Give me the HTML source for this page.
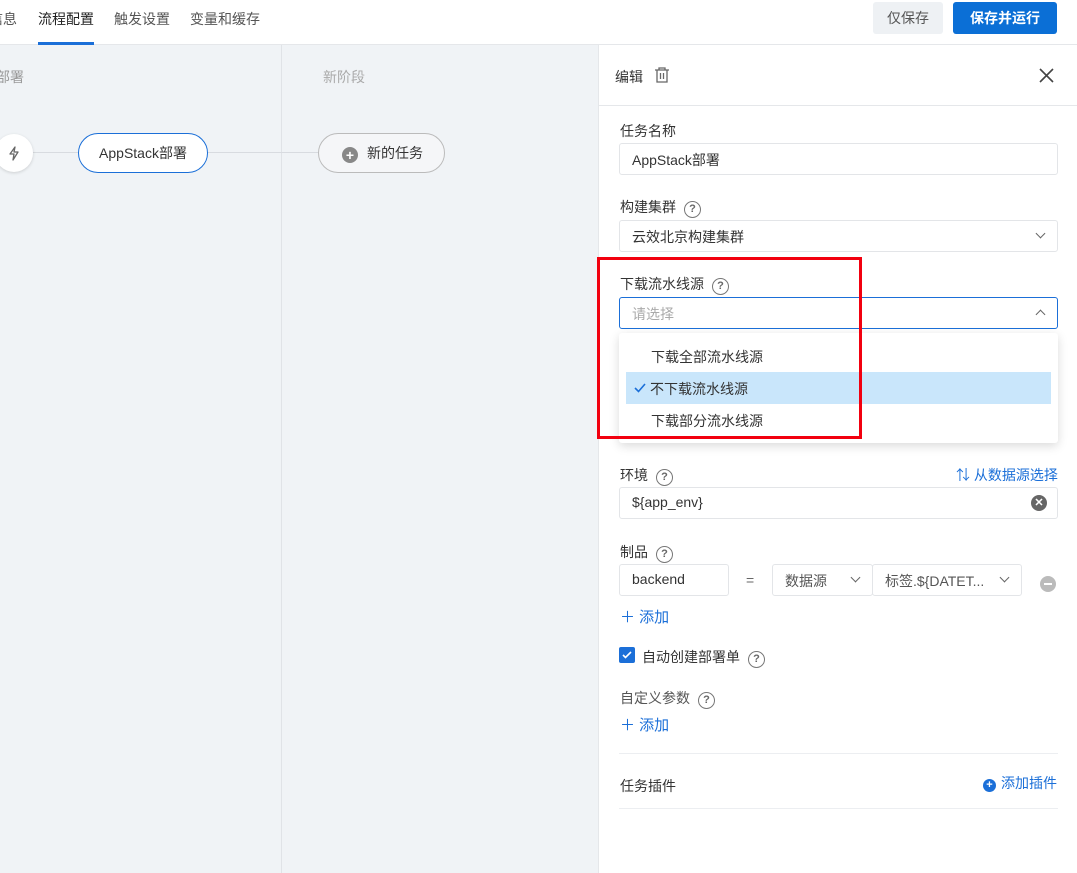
<!DOCTYPE html>
<html><head><meta charset="utf-8"><style>
*{box-sizing:border-box;margin:0;padding:0}
body{width:1077px;height:873px;overflow:hidden;position:relative;font-family:"Liberation Sans","Noto Sans CJK SC",sans-serif;font-size:14px;color:#333;background:#fff}
.a{position:absolute}
.top{left:0;top:0;width:1077px;height:45px;background:#fff;border-bottom:1px solid #e5e7ea}
.tab{top:9px;font-size:14px;color:#555}
.canvas{left:0;top:45px;width:598px;height:828px;background:#f0f3f6}
.panel{left:598px;top:45px;width:479px;height:828px;background:#fff;border-left:1px solid #e5e7ea}
.lbl{left:620px;font-size:14px;color:#333}
.inp{left:619px;width:439px;height:32px;border:1px solid #e3e5e8;border-radius:3px;background:#fff;font-size:14px;color:#333;padding:6px 12px}
.q{display:inline-block;width:17px;height:17px;border:1.5px solid #777;border-radius:50%;font-size:11px;line-height:14px;text-align:center;color:#666;vertical-align:0;margin-left:8px;font-weight:bold}
.blue{color:#1b6fd8}
.chev{position:absolute;right:13px;top:9px;width:7px;height:7px;border-right:1.3px solid #666;border-bottom:1.3px solid #666;transform:rotate(45deg)}
</style></head><body>
<div class="a top"></div>
<div class="a tab" style="left:-11px">信息</div>
<div class="a tab" style="left:38px;color:#222">流程配置</div>
<div class="a" style="left:38px;top:42px;width:56px;height:3px;background:#1b6fd8"></div>
<div class="a tab" style="left:114px">触发设置</div>
<div class="a tab" style="left:190px">变量和缓存</div>
<div class="a" style="left:873px;top:2px;width:70px;height:32px;background:#eef1f4;border-radius:3px;color:#555;text-align:center;line-height:32px">仅保存</div>
<div class="a" style="left:953px;top:2px;width:104px;height:32px;background:#0b6fd6;border-radius:3px;color:#fff;text-align:center;line-height:32px;font-weight:bold">保存并运行</div>

<div class="a canvas"></div>
<div class="a" style="left:281px;top:45px;width:1px;height:828px;background:#e0e3e7"></div>
<div class="a" style="left:-4px;top:67px;color:#999">部署</div>
<div class="a" style="left:323px;top:67px;color:#aaa">新阶段</div>
<div class="a" style="left:20px;top:152px;width:300px;height:1px;background:#d8dbe0"></div>
<div class="a" style="left:-5px;top:134px;width:38px;height:38px;border-radius:50%;background:#fff;box-shadow:0 1px 3px rgba(0,0,0,.15)"></div>
<svg class="a" style="left:8px;top:146px" width="12" height="15" viewBox="0 0 12 15" fill="none" stroke="#666" stroke-width="1.3" stroke-linejoin="round"><path d="M7 1L2 8h4l-1 6 5-8H6z"/></svg>
<div class="a" style="left:78px;top:133px;width:130px;height:40px;border:1px solid #1b6fd8;border-radius:20px;background:#fff;text-align:center;line-height:38px;color:#333">AppStack部署</div>
<div class="a" style="left:318px;top:133px;width:127px;height:40px;border:1px solid #bbb;border-radius:20px;background:#f5f6f8;line-height:38px;color:#333;padding-left:23px"><span style="display:inline-block;width:16px;height:16px;border-radius:50%;background:#888;color:#fff;font-size:14px;line-height:16px;text-align:center;font-weight:bold;vertical-align:-2px;margin-right:9px">+</span>新的任务</div>

<div class="a panel"></div>
<div class="a" style="left:598px;top:105px;width:479px;height:1px;background:#e5e7ea"></div>
<div class="a" style="left:615px;top:67px">编辑</div>
<svg class="a" style="left:654px;top:67px" width="16" height="16" viewBox="0 0 16 16" fill="none" stroke="#666" stroke-width="1.3"><path d="M1 3h14M5 3V1h6v2M3 3v12h10V3M6.5 6v6M9.5 6v6"/></svg>
<svg class="a" style="left:1039px;top:68px" width="15" height="15" viewBox="0 0 15 15" stroke="#444" stroke-width="1.6"><path d="M1 1l13 13M14 1L1 14"/></svg>

<div class="a lbl" style="top:121px">任务名称</div>
<div class="a inp" style="top:143px">AppStack部署</div>
<div class="a lbl" style="top:197px">构建集群<span class="q">?</span></div>
<div class="a inp" style="top:220px">云效北京构建集群<span class="chev"></span></div>
<div class="a lbl" style="top:274px">下载流水线源<span class="q">?</span></div>
<div class="a inp" style="top:297px;border-color:#1b6fd8;color:#aaa">请选择<span class="chev" style="transform:rotate(225deg);top:13px"></span></div>
<div class="a" style="left:619px;top:333px;width:439px;height:110px;background:#fff;border-radius:3px;box-shadow:0 3px 10px rgba(0,0,0,.15)"></div>
<div class="a" style="left:651px;top:347px">下载全部流水线源</div>
<div class="a" style="left:626px;top:372px;width:425px;height:32px;background:#c9e6fb"></div>
<svg class="a" style="left:634px;top:383px" width="12" height="10" viewBox="0 0 12 10" fill="none" stroke="#1b6fd8" stroke-width="1.6"><path d="M1 5l3.5 3.5L11 1"/></svg>
<div class="a" style="left:650px;top:379px">不下载流水线源</div>
<div class="a" style="left:651px;top:411px">下载部分流水线源</div>
<div class="a" style="left:597px;top:257px;width:265px;height:182px;border:3px solid #f2000f"></div>

<div class="a lbl" style="top:465px">环境<span class="q">?</span></div>
<div class="a blue" style="left:956px;top:465px">⇅ 从数据源选择</div>
<div class="a inp" style="top:487px">${app_env}<span style="position:absolute;right:10px;top:7px;width:16px;height:16px;border-radius:50%;background:#666;color:#fff;font-size:11px;line-height:16px;text-align:center;font-weight:bold">✕</span></div>
<div class="a lbl" style="top:542px">制品<span class="q">?</span></div>
<div class="a inp" style="top:564px;width:110px">backend</div>
<div class="a" style="left:746px;top:572px;color:#666">=</div>
<div class="a inp" style="left:772px;top:564px;width:101px;color:#555">数据源<span class="chev"></span></div>
<div class="a inp" style="left:872px;top:564px;width:150px;color:#555">标签.${DATET...<span class="chev"></span></div>
<div class="a" style="left:1040px;top:576px;width:16px;height:16px;border-radius:50%;background:#bbb"><div style="margin:7px 4px;height:2px;background:#fff"></div></div>
<div class="a blue" style="left:620px;top:606px;font-size:15px">＋ 添加</div>
<div class="a" style="left:619px;top:647px;width:16px;height:16px;background:#1b6fd8;border-radius:2px"></div>
<svg class="a" style="left:622px;top:651px" width="10" height="8" viewBox="0 0 10 8" fill="none" stroke="#fff" stroke-width="1.6"><path d="M1 4l2.5 2.5L9 1"/></svg>
<div class="a lbl" style="left:642px;top:647px">自动创建部署单<span class="q">?</span></div>
<div class="a lbl" style="top:688px;color:#555">自定义参数<span class="q">?</span></div>
<div class="a blue" style="left:620px;top:714px;font-size:15px">＋ 添加</div>
<div class="a" style="left:619px;top:753px;width:439px;height:1px;background:#eceef1"></div>
<div class="a lbl" style="top:776px">任务插件</div>
<div class="a blue" style="left:983px;top:773px"><span style="display:inline-block;width:13px;height:13px;border-radius:50%;background:#1b6fd8;color:#fff;font-size:11px;line-height:13px;text-align:center;font-weight:bold;vertical-align:0;margin-right:5px">+</span>添加插件</div>
<div class="a" style="left:619px;top:808px;width:439px;height:1px;background:#eceef1"></div>
</body></html>
